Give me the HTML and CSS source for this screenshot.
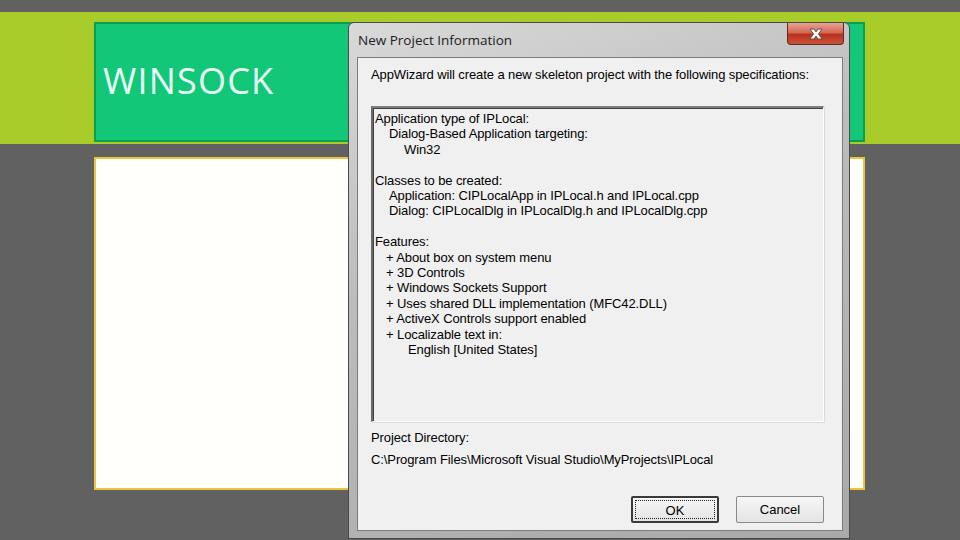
FILE: index.html
```html
<!DOCTYPE html>
<html lang="en">
<head>
    <meta charset="UTF-8">
    <meta name="viewport" content="width=device-width, initial-scale=1.0">
    <title>Winsock</title>
    <link rel="stylesheet" href="styles.css">
</head>
<body>

    <div class="slide">
        <div class="header-band">
            <div class="title-box">
                <h1>WINSOCK</h1>
            </div>
        </div>
        <div class="content-box"></div>
    </div>

    <!-- dialog window sits on top of the slide -->
    <div class="dialog">
        <div class="title-bar">
            <span class="title-text">New Project Information</span>
            <div class="close-btn">
                <svg width="20" height="14" viewBox="0 0 20 14">
                    <path d="M4 2 L8 2 L10 5 L12 2 L16 2 L12.5 7 L16 12 L12 12 L10 9 L8 12 L4 12 L7.5 7 Z" fill="#fff" stroke="#6b4a48" stroke-width="1"/>
                </svg>
            </div>
        </div>
        <div class="client">
            <p class="intro">AppWizard will create a new skeleton project with the following specifications:</p>
            <div class="listbox">
                <div class="line">Application type of IPLocal:</div>
                <div class="line ind1">Dialog-Based Application targeting:</div>
                <div class="line ind2">Win32</div>
                <div class="line">&nbsp;</div>
                <div class="line">Classes to be created:</div>
                <div class="line ind1">Application: CIPLocalApp in IPLocal.h and IPLocal.cpp</div>
                <div class="line ind1">Dialog: CIPLocalDlg in IPLocalDlg.h and IPLocalDlg.cpp</div>
                <div class="line">&nbsp;</div>
                <div class="line">Features:</div>
                <div class="line feat">+ About box on system menu</div>
                <div class="line feat">+ 3D Controls</div>
                <div class="line feat">+ Windows Sockets Support</div>
                <div class="line feat">+ Uses shared DLL implementation (MFC42.DLL)</div>
                <div class="line feat">+ ActiveX Controls support enabled</div>
                <div class="line feat">+ Localizable text in:</div>
                <div class="line ind3">English [United States]</div>
            </div>
            <div class="label">Project Directory:</div>
            <div class="path">C:\Program Files\Microsoft Visual Studio\MyProjects\IPLocal</div>
            <div class="buttons">
                <button class="btn btn-default"><span>OK</span></button>
                <button class="btn">Cancel</button>
            </div>
        </div>
    </div>

</body>
</html>
```

FILE: styles.css
```css
body {
    margin: 0;
    background-color: #616161;
    font-family: 'Liberation Sans', Arial, sans-serif;
    overflow: hidden;
}
.slide {
    padding-top: 12px;
}
.header-band {
    background-color: #a8cc2a;
    padding: 10px 0 2px 94px;
}
.title-box {
    width: 767px;
    height: 116px;
    background-color: #12c878;
    border: 2px solid #0c9e50;
    display: flex;
    align-items: center;
}
.title-box h1 {
    margin: 0 0 4px 7px;
    font-family: 'Open Sans', sans-serif;
    font-weight: 400;
    font-size: 36px;
    color: #eafff5;
    letter-spacing: 1.2px;
}
.content-box {
    margin: 13px 0 0 94px;
    width: 767px;
    height: 329px;
    background-color: #fffffb;
    border: 2px solid #e9c43c;
}

/* dialog */
.dialog {
    position: absolute;
    left: 348px;
    top: 22px;
    width: 486px;
    height: 508px;
    border: 1px solid #4a4a4a;
    border-radius: 6px 6px 0 0;
    background: linear-gradient(160deg, #d9d9d9 0%, #bcbcbc 40%, #a9a9a9 100%);
    display: flex;
    flex-direction: column;
    padding: 0 6px 7px 8px;
}
.title-bar {
    height: 34px;
    display: flex;
    align-items: flex-start;
    justify-content: space-between;
}
.title-text {
    margin: 8px 0 0 1px;
    font-family: 'Open Sans', sans-serif;
    font-size: 13.5px;
    color: #1c1c1c;
}
.close-btn {
    width: 55px;
    height: 21px;
    margin-right: -1px;
    border: 1px solid #5e2a24;
    border-top: none;
    border-radius: 0 0 4px 4px;
    background: linear-gradient(#e7a393 0%, #d46a56 45%, #b8311c 55%, #c9533c 100%);
    display: flex;
    align-items: center;
    justify-content: center;
}
.client {
    flex: 1;
    background-color: #f0f0f0;
    border: 1px solid #7c7c7c;
    padding: 0 18px 0 13px;
    font-size: 13px;
    color: #000;
    letter-spacing: -0.1px;
    display: flex;
    flex-direction: column;
}
.intro {
    margin: 9px 0 0 0;
    line-height: 15px;
}
.listbox {
    margin-top: 24px;
    height: 310px;
    border-top: 2px solid #808080;
    border-left: 2px solid #6a6a6a;
    border-right: 1px solid #fff;
    border-bottom: 1px solid #fff;
    box-shadow: inset 1px 1px 0 #404040, 1px 1px 0 #dcdcdc;
    padding: 3px 0 0 2px;
}
.line {
    line-height: 15.4px;
    white-space: nowrap;
}
.ind1 { padding-left: 14px; }
.ind2 { padding-left: 29px; }
.ind3 { padding-left: 33px; }
.feat { padding-left: 11px; }
.label {
    margin-top: 8px;
    line-height: 15px;
}
.path {
    margin-top: 7px;
    line-height: 15px;
}
.buttons {
    margin-top: 29px;
    display: flex;
    justify-content: flex-end;
    gap: 17px;
}
.btn {
    width: 88px;
    height: 27px;
    font-family: 'Liberation Sans', Arial, sans-serif;
    font-size: 13px;
    color: #000;
    background: linear-gradient(#f6f6f6, #e4e4e4);
    border: 1px solid #8a8a8a;
    border-radius: 2px;
    padding: 0;
}
.btn-default {
    border: 2px solid #3a3a3a;
    padding: 2px;
}
.btn-default span {
    display: block;
    height: 100%;
    border: 1px dotted #222;
    box-sizing: border-box;
    line-height: 19px;
}
```
